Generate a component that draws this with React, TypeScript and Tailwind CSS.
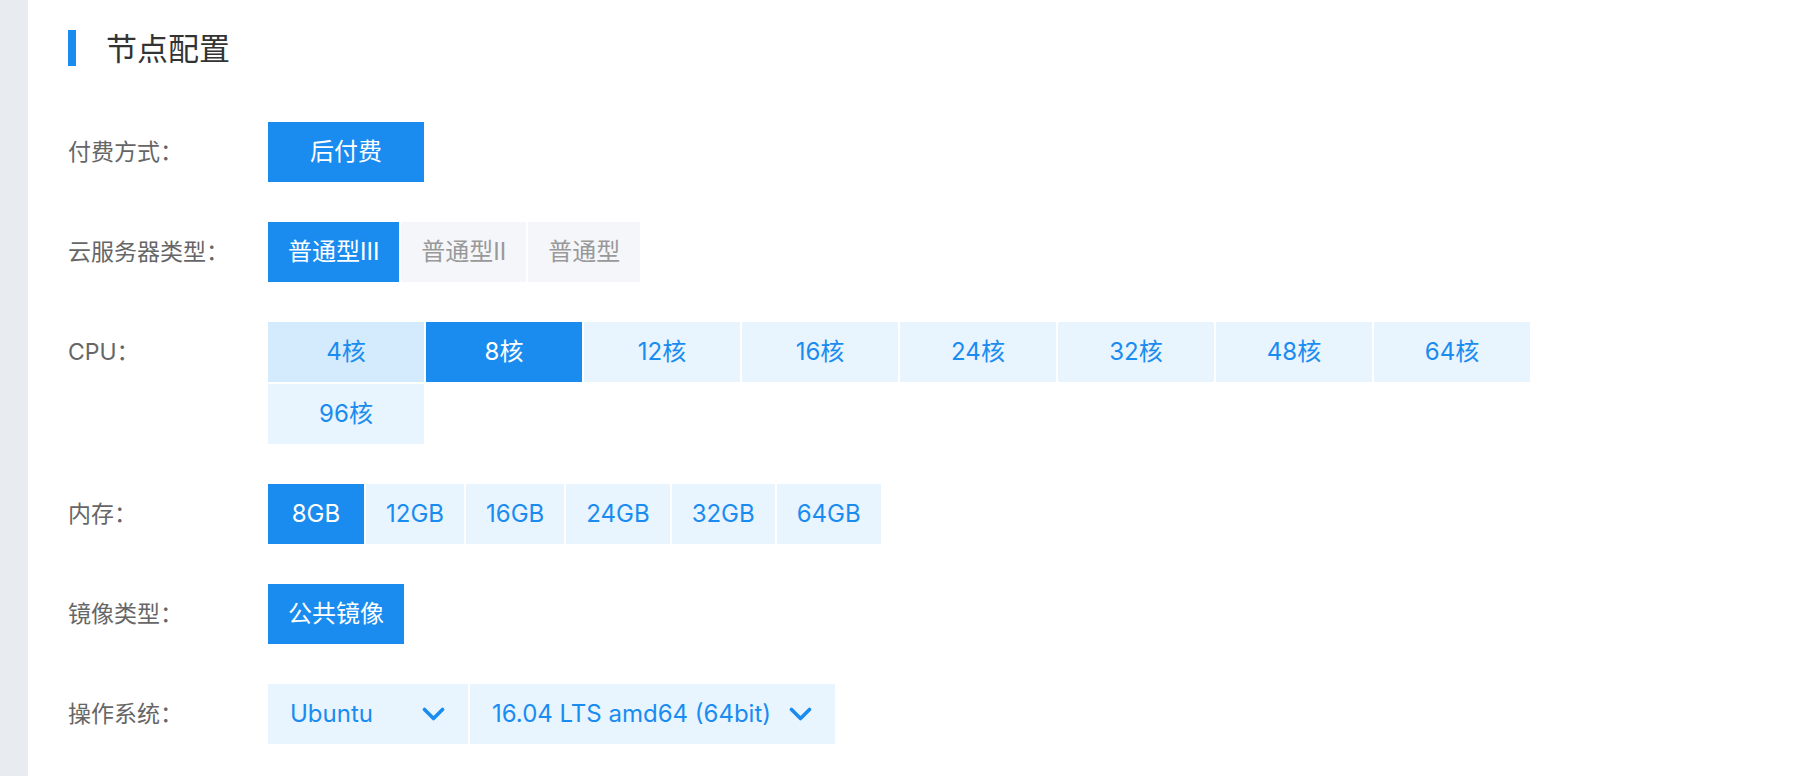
import React from "react";

const font = { fontFamily: "Inter, 'Noto Sans CJK SC', sans-serif" };

function Chevron() {
  return (
    <svg width="23" height="15" viewBox="0 0 23 15" fill="none">
      <path d="M2.5 2.5 L11.5 11.5 L20.5 2.5" stroke="#1a8cf0" strokeWidth="3.6" strokeLinecap="round" strokeLinejoin="round" />
    </svg>
  );
}

function Row({ label, children }: { label: string; children: React.ReactNode }) {
  return (
    <div className="flex items-start mt-10 first:mt-0">
      <div className="w-[200px] shrink-0 h-[60px] flex items-center text-[23px] text-[#666666]">{label}：</div>
      <div className="flex-1">{children}</div>
    </div>
  );
}

export default function App() {
  const cpus = ["4核", "8核", "12核", "16核", "24核", "32核", "48核", "64核", "96核"];
  const mems = ["8GB", "12GB", "16GB", "24GB", "32GB", "64GB"];
  return (
    <div className="flex min-h-[776px] bg-white" style={font}>
      <div className="w-[28px] shrink-0 bg-[#e8ebf0]" />
      <div className="flex-1 pl-[40px] pt-[30px]">
        <div className="flex items-center h-[36px]">
          <div className="w-[8px] h-[36px] bg-[#1a8cf0]" />
          <div className="ml-[30px] text-[31px] text-[#333333] leading-none">节点配置</div>
        </div>
        <div className="mt-[56px] flex flex-col">
          <Row label="付费方式">
            <div className="flex">
              <div className="w-[156px] h-[60px] flex items-center justify-center bg-[#1a8cf0] text-white text-[24px]">后付费</div>
            </div>
          </Row>
          <Row label="云服务器类型">
            <div className="flex gap-[2px]">
              <div className="h-[60px] px-5 flex items-center justify-center bg-[#1a8cf0] text-white text-[24px]">普通型III</div>
              <div className="h-[60px] px-5 flex items-center justify-center bg-[#f5f6fa] text-[#999999] text-[24px]">普通型II</div>
              <div className="h-[60px] px-5 flex items-center justify-center bg-[#f5f6fa] text-[#999999] text-[24px]">普通型</div>
            </div>
          </Row>
          <Row label="CPU">
            <div className="flex flex-wrap gap-[2px] w-[1300px]">
              {cpus.map((c, i) => (
                <div
                  key={c}
                  className={
                    i === 1
                      ? "w-[156px] h-[60px] flex items-center justify-center bg-[#1a8cf0] text-white text-[24px]"
                      : i === 0
                      ? "w-[156px] h-[60px] flex items-center justify-center bg-[#d4eafd] text-[#1a8cf0] text-[24px]"
                      : "w-[156px] h-[60px] flex items-center justify-center bg-[#e8f4fe] text-[#1a8cf0] text-[24px]"
                  }
                >
                  {c}
                </div>
              ))}
            </div>
          </Row>
          <Row label="内存">
            <div className="flex gap-[2px]">
              {mems.map((m, i) => (
                <div
                  key={m}
                  className={
                    i === 0
                      ? "min-w-[96px] h-[60px] px-5 flex items-center justify-center bg-[#1a8cf0] text-white text-[24px]"
                      : "min-w-[96px] h-[60px] px-5 flex items-center justify-center bg-[#e8f4fe] text-[#1a8cf0] text-[24px]"
                  }
                >
                  {m}
                </div>
              ))}
            </div>
          </Row>
          <Row label="镜像类型">
            <div className="flex">
              <div className="h-[60px] px-5 flex items-center justify-center bg-[#1a8cf0] text-white text-[24px]">公共镜像</div>
            </div>
          </Row>
          <Row label="操作系统">
            <div className="flex gap-[2px]">
              <div className="w-[200px] h-[60px] pl-[22px] pr-[23px] flex items-center justify-between bg-[#e8f4fe] text-[#1a8cf0] text-[24px]">
                <span>Ubuntu</span>
                <Chevron />
              </div>
              <div className="h-[60px] pl-[22px] pr-[23px] flex items-center gap-[18px] bg-[#e8f4fe] text-[#1a8cf0] text-[24px]">
                <span>16.04 LTS amd64 (64bit)</span>
                <Chevron />
              </div>
            </div>
          </Row>
        </div>
      </div>
    </div>
  );
}
